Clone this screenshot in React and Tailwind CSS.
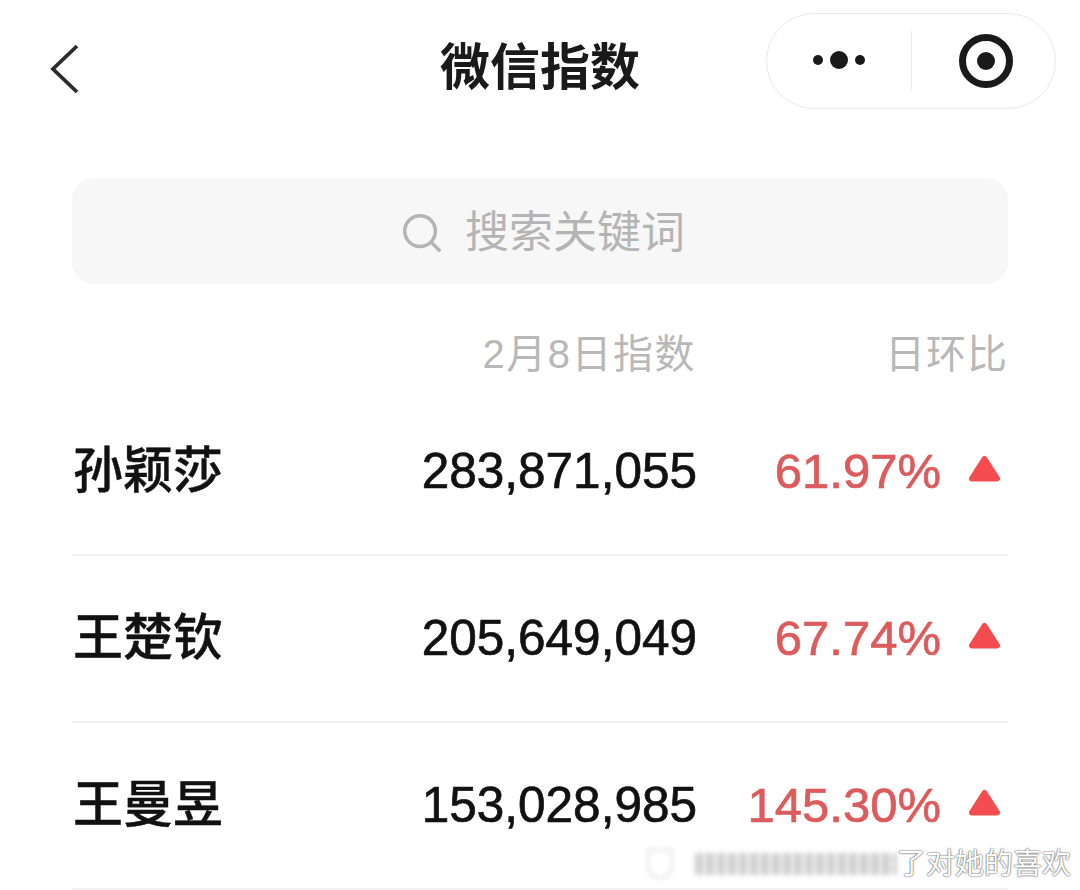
import { Search } from 'lucide-react';

const FONT = '"Liberation Sans", "Noto Sans CJK SC", sans-serif';

const rows = [
  { name: '孙颖莎', value: '283,871,055', pct: '61.97%' },
  { name: '王楚钦', value: '205,649,049', pct: '67.74%' },
  { name: '王曼昱', value: '153,028,985', pct: '145.30%' },
];

function Row({ name, value, pct }) {
  return (
    <div className="flex h-[167px] items-center border-b-2 border-[#f1f1f1]">
      <div className="w-[300px] pl-[1px] text-[50px] font-medium text-[#111] [-webkit-text-stroke:0.4px_#111]">{name}</div>
      <div className="w-[325px] text-right text-[49.5px] text-[#111] [-webkit-text-stroke:0.7px_#111]">{value}</div>
      <div className="w-[244px] text-right text-[49px] text-[#dc5b5c] [-webkit-text-stroke:0.7px_#dc5b5c]">{pct}</div>
      <svg className="ml-[28px] mb-[6px]" width="31" height="27" viewBox="0 0 31 27">
        <path d="M15.5 4 L28 23.5 H3 Z" fill="#f54d4f" stroke="#f54d4f" strokeWidth="6" strokeLinejoin="round" />
      </svg>
    </div>
  );
}

export default function App() {
  return (
    <div className="relative h-[890px] w-[1080px] overflow-hidden bg-white" style={{ fontFamily: FONT }}>
      {/* 상단 내비 */}
      <div className="flex h-[122px] items-center justify-between pl-[48px] pr-[24px]">
        <svg className="mt-[18px]" width="34" height="52" viewBox="0 0 34 52" fill="none">
          <path d="M29 2 L5 25 L29 48" stroke="#2b2b2b" strokeWidth="3.8" />
        </svg>
        <div className="ml-[358px] mr-auto mt-[14px] text-[50px] font-bold text-[#1a1a1a]">微信指数</div>
        <div className="flex h-[96px] w-[290px] items-center rounded-[48px] border border-[#e9e9e9]">
          <div className="flex h-[60px] w-[145px] items-center justify-center gap-[7px] border-r border-[#ececec] pb-[2px]">
            <span className="h-[10px] w-[10px] rounded-full bg-[#1a1a1a]" />
            <span className="h-[18px] w-[18px] rounded-full bg-[#1a1a1a]" />
            <span className="h-[10px] w-[10px] rounded-full bg-[#1a1a1a]" />
          </div>
          <div className="flex flex-1 items-center justify-center pl-[4px]">
            <div className="flex h-[54px] w-[54px] items-center justify-center rounded-full border-[7px] border-[#1a1a1a]">
              <span className="h-[18px] w-[18px] rounded-full bg-[#1a1a1a]" />
            </div>
          </div>
        </div>
      </div>

      <div className="px-[72px]">
        {/* 검색창 */}
        <div className="mt-[56px] flex h-[106px] items-center justify-center gap-[20px] rounded-[22px] bg-[#f7f7f7] pl-[4px] pt-[3px]">
          <Search size={46} strokeWidth={1.8} color="#b4b4b4" />
          <span className="text-[44px] text-[#b4b4b4]">搜索关键词</span>
        </div>

        {/* 표 헤더 */}
        <div className="mt-[44px] flex h-[52px] items-center text-[40px] text-[#b8b8b8]">
          <div className="w-[624px] text-right tracking-[1.5px]">2月8日指数</div>
          <div className="flex-1 text-right tracking-[1px]">日环比</div>
        </div>

        <div className="mt-[9px]">
          {rows.map((r) => (
            <Row key={r.name} {...r} />
          ))}
        </div>
      </div>

      {/* 워터마크 */}
      <div className="absolute bottom-[4px] right-[9px] flex items-center">
        <div className="flex h-[30px] w-[250px] items-center opacity-60 blur-[2.5px]">
          <span className="h-[30px] w-[26px] rounded-b-full border-2 border-[#ccc]" />
          <span className="ml-[22px] h-[22px] flex-1 bg-[repeating-linear-gradient(90deg,#b0b0b0_0px,#b0b0b0_7px,#f0f0f0_9px,#f0f0f0_11px)]" />
        </div>
        <div className="text-[29px] text-white [text-shadow:0_0_2px_#555,0_0_1px_#555]">了对她的喜欢</div>
      </div>
    </div>
  );
}
